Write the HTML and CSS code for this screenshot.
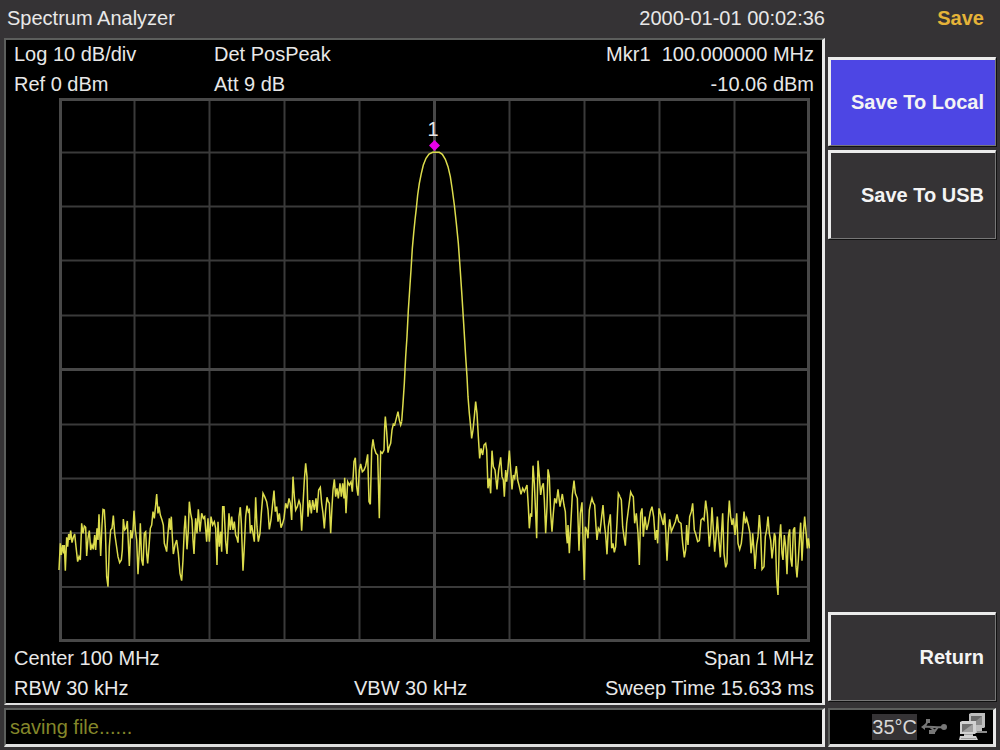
FILE: index.html
```html
<!DOCTYPE html>
<html lang="en">
<head>
<meta charset="utf-8">
<title>Spectrum Analyzer</title>
<link rel="stylesheet" href="styles.css">
</head>
<body>
<div class="screen">
  <main class="main">
    <header class="titlebar">
      <h1 class="title">Spectrum Analyzer</h1>
      <time class="clock">2000-01-01 00:02:36</time>
    </header>
    <section class="display">
      <div class="readout readout-top">
        <span>Log 10 dB/div</span><span>Det PosPeak</span><span class="end">Mkr1&nbsp; 100.000000 MHz</span>
        <span>Ref 0 dBm</span><span>Att 9 dB</span><span class="end">-10.06 dBm</span>
      </div>
      <svg class="plot" viewBox="58 98 752 544" role="img" aria-label="Spectrum trace">
        <path class="grid" d="M134.500 100V640M209.500 100V640M284.500 100V640M359.500 100V640M509.500 100V640M584.500 100V640M659.500 100V640M734.500 100V640M60 152.500H808M60 206.500H808M60 260.500H808M60 315.500H808M60 424.500H808M60 478.500H808M60 533H808M60 587H808"/>
        <path class="axis" d="M434.500 100V640M60 369.500H808"/>
        <rect class="frame" x="60.500" y="99.500" width="748" height="541"/>
        <polyline class="trace" transform="translate(50 450) scale(.33333)" points="27,360 31,280 34,315 38,285 41,310 43,285 46,362 50,262 53,290 56,252 59,270 62,242 66,278 70,262 74,252 78,290 83,335 87,320 91,330 95,220 99,250 103,228 107,232 110,318 114,265 118,242 122,300 126,285 130,298 134,255 137,300 141,235 144,270 147,193 152,318 156,225 159,178 163,180 166,235 170,380 174,410 178,290 182,240 186,235 190,197 194,250 199,285 204,320 209,338 214,330 217,300 220,207 224,240 228,235 232,213 235,280 238,348 242,240 246,265 249,240 252,182 256,240 260,270 264,373 268,300 271,220 275,330 279,347 283,250 287,245 290,310 293,340 297,290 301,235 305,225 309,185 313,205 317,165 320,132 324,190 327,170 331,195 336,210 340,225 343,280 346,290 350,305 354,250 358,205 361,240 364,200 367,260 370,312 375,285 380,270 385,310 390,370 395,392 399,330 403,235 406,197 411,298 415,240 418,155 422,190 426,210 429,270 432,312 437,205 441,250 445,178 450,245 455,190 460,205 464,200 470,275 474,205 478,275 483,200 488,225 493,215 497,235 501,345 504,215 508,290 512,245 515,305 518,170 522,170 527,275 531,312 537,190 541,240 545,200 549,240 553,215 557,255 561,265 564,278 567,200 571,172"/>
        <polyline class="trace" transform="translate(240 390) scale(.33333)" points="1,352 4,400 9,542 13,470 17,380 21,347 25,365 28,360 31,430 35,405 39,430 43,455 47,322 51,410 55,455 60,430 64,370 69,310 74,320 80,335 84,360 88,418 93,390 97,350 102,302 106,365 110,350 114,395 118,370 123,413 128,400 132,385 137,340 142,355 147,325 151,340 155,390 159,260 163,320 167,360 172,350 177,332 181,345 185,422 189,345 193,270 197,220 201,260 204,380 209,330 214,370 218,330 223,360 228,325 231,368 236,300 241,292 245,340 249,370 253,415 257,360 261,322 265,335 268,340 272,430 276,350 279,300 283,268 287,320 291,295 295,325 300,280 304,320 308,280 312,325 314,263 318,370 323,275 328,285 333,275 337,305 342,215 346,203 350,290 354,317 358,240 362,222 367,245 372,240 377,228 383,193 387,335 391,343 395,180 399,148 403,175 408,190 413,195 418,385 422,185 427,190 432,180 434,110 436,80 440,125 444,188 448,170 452,160 456,120 460,102 464,105 469,85 474,65 478,90 482,105 485,95"/>
        <polyline class="trace" transform="translate(380 110) scale(.33333)" points="65,935 69,880 73,820 77,740 81,680 85,600 89,540 93,480 97,415 101,370 105,330 109,295 113,255 118,220 124,190 130,165 138,145 147,132 158,127 178,127 187,133 196,148 204,170 211,200 217,240 223,285 229,340 235,400 240,470 246,560 251,640 257,740 261,800 264,860 268,910 273,960"/>
        <polyline class="trace" transform="translate(430 380) scale(.33333)" points="123,150 125,175 129,150 133,110 137,65 141,100 145,170 149,235 153,205 158,225 162,195 167,190 170,210 174,325 178,295 182,340 186,212 190,260 195,270 201,328 206,270 212,232 216,290 220,300 223,350 227,270 230,305 234,265 238,212 243,280 246,328 250,285 254,295 259,258 263,300 268,320 273,343 278,325 283,335 291,315 295,380 298,445 302,400 305,410 309,257 313,310 317,400 320,475 324,242 328,290 332,345 336,320 340,310 343,360 347,460 351,380 354,268 358,290 362,400 366,455 370,400 374,355 379,370 384,328 390,380 397,342 402,375 406,395 409,460 412,490 414,435 418,520 422,440 427,345 432,302 436,340 442,355 447,512 451,400 456,367 460,510 463,600 466,440 470,450 474,475 478,390 482,370 486,355 490,368 494,375 498,440 501,480 505,445 510,455 515,410 519,375 523,430 527,465 531,523 535,440 541,403 545,505 549,490 553,517 557,500 561,430 565,340 570,350"/>
        <polyline class="trace" transform="translate(620 470) scale(.33333)" points="0,80 4,90 8,170 12,200 16,227 20,160 25,120 32,66 36,75 40,80 44,160 49,130 54,190 58,285 62,130 66,115 70,200 75,140 80,180 85,160 91,125 96,110 101,140 106,210 110,180 113,220 117,115 121,130 125,145 130,165 134,130 137,180 141,272 145,190 149,148 154,185 160,170 166,155 171,133 176,155 183,160 188,220 193,262 197,240 200,165 204,225 209,140 214,125 218,100 223,180 228,195 233,215 238,212 243,150 248,145 252,150 257,92 262,130 268,230 272,190 276,112 280,180 284,245 288,200 292,140 296,200 301,262 305,180 308,130 312,250 317,292 321,280 324,160 328,92 332,140 336,165 340,145 345,195 350,130 354,220 359,238 364,220 368,180 372,125 376,160 380,145 385,165 390,190 393,250 396,225 398,190 402,240 405,297 410,225 414,200 418,135 422,190 426,298 432,290 436,200 440,180 444,140 448,190 452,210 456,265 460,230 463,190 466,200 470,330 474,375 478,210 482,163 486,250 489,270 493,195 497,230 501,313 505,200 509,178 512,265 516,290 520,180 524,172 528,290 531,322 535,270 539,200 542,158 546,272 550,190 554,140 558,185 562,235 565,205 569,235"/>
        <path class="marker" d="M434.500 140L440 145.500L434.500 151L429 145.500Z"/>
        <text class="marker-label" x="433" y="136" text-anchor="middle">1</text>
      </svg>
      <div class="readout readout-bottom">
        <span class="start">Center 100 MHz</span><span class="end">Span 1 MHz</span>
        <span>RBW 30 kHz</span><span>VBW 30 kHz</span><span class="end">Sweep Time 15.633 ms</span>
      </div>
    </section>
    <div class="message" role="status">saving file......</div>
  </main>
  <aside class="side">
    <h2 class="menu-title">Save</h2>
    <nav class="menu">
      <button class="key key-active" type="button">Save To Local</button>
      <button class="key" type="button">Save To USB</button>
      <button class="key key-return" type="button">Return</button>
    </nav>
    <div class="tray">
      <span class="temp">35°C</span>
      <svg class="usb" viewBox="0 0 26 16" aria-label="USB">
        <path d="M2 8C8 7 17 9 24 8M4 7L7 2H9M9 8L14 12L17 8"/>
        <path class="solid" d="M0 8L4 5V11ZM5 0H9V4H5ZM8 11H14V15H8Z"/>
        <circle class="solid" cx="23" cy="8" r="3"/>
      </svg>
      <svg class="lan" viewBox="0 0 28 28" aria-label="Network">
        <path fill="#bdbdbd" d="M10 1L12 0H26V14L25 15H10ZM15 15H23V18H27L28 20H15Z"/>
        <path fill="#686868" d="M12 3H23V12H12Z"/>
        <path fill="#8c8c8c" d="M12 12L23 3V12ZM18 18H28V20H18Z"/>
        <path fill="#d2d2d2" d="M1 9L3 8H17V20L16 21H1ZM5 21H14V23H17L19 27H0L1 23H5Z"/>
        <path fill="#707070" d="M3 11H14V19H3Z"/>
        <path fill="#a0a0a0" d="M3 19L14 11V19ZM5 21H14V22H5ZM2 25H17V26H2Z"/>
      </svg>
    </div>
  </aside>
</div>
</body>
</html>
```
FILE: styles.css
```css
* {
  box-sizing: border-box;
}

body {
  margin: 0;
  background: #353335;
  color: #e8e8e8;
  font: 20px/28px "Liberation Sans", Arial, sans-serif;
}

.screen {
  display: grid;
  grid-template-columns: minmax(0, 1fr) 168px;
  gap: 3px;
  min-height: 100vh;
  padding: 0 4px 3px;
}

.main,
.side {
  display: flex;
  flex-direction: column;
}

.titlebar {
  display: flex;
  justify-content: space-between;
  height: 38px;
  padding: 4px 0 0 3px;
}

.title,
.menu-title {
  margin: 0;
  font-size: 20px;
}

.title {
  font-weight: 400;
}

.display,
.message,
.tray {
  border: 2px solid #5c5e5c;
  border-right: 3px solid #e8e8e8;
  border-bottom-color: #e0e0e0;
  background: #000;
}

.display {
  flex: 1;
  padding-left: 8px;
  padding-right: 8px;
}

.readout {
  display: grid;
  row-gap: 2px;
}

.readout-top {
  grid-template-columns: 1fr 1fr 2fr;
}

.readout-bottom {
  grid-template-columns: 340px 1fr 1fr;
  margin-top: 2px;
}

.start {
  grid-column: span 2;
}

.end {
  text-align: right;
}

.plot {
  display: block;
  width: calc(100% - 48px);
  margin-left: 44px;
}

.grid {
  fill: none;
  stroke: #3a3a3a;
  stroke-width: 2;
}

.axis,
.frame {
  fill: none;
  stroke: #484848;
  stroke-width: 3;
}

.trace {
  fill: none;
  stroke: #dcdc4c;
  stroke-width: 4.5;
}

.marker {
  fill: #e800e8;
}

.marker-label {
  fill: #e8e8e8;
  font-size: 20px;
}

.message {
  height: 39px;
  margin-top: 3px;
  padding: 3px 4px;
  border-bottom-width: 3px;
  color: #84872a;
}

.menu-title {
  height: 57px;
  padding: 4px 12px 0 0;
  color: #e5b338;
  text-align: right;
}

.menu {
  display: flex;
  flex: 1;
  flex-direction: column;
  gap: 4px;
}

.key {
  height: 89px;
  padding: 0 11px 2px 0;
  border: 3px solid #ececec;
  border-right: 1px solid #777;
  border-bottom: 1px solid #777;
  background: #353335;
  box-shadow: 1px 1px 0 #111;
  color: #f4f4f4;
  font: bold 20px/28px "Liberation Sans", Arial, sans-serif;
  text-align: right;
}

.key-active {
  background: #4d46e4;
}

.key-return {
  margin-top: auto;
}

.tray {
  display: flex;
  align-items: center;
  justify-content: flex-end;
  gap: 4px;
  height: 39px;
  margin-top: 7px;
  padding-right: 6px;
  border-bottom-width: 3px;
}

.temp {
  height: 26px;
  background: #353335;
  color: #d8d8d8;
  line-height: 26px;
}

.usb {
  width: 26px;
  height: 16px;
  fill: none;
  stroke: #777;
  stroke-width: 2;
}

.solid {
  fill: #777;
  stroke: none;
}

.lan {
  width: 28px;
  height: 28px;
  margin-left: 8px;
}
```
